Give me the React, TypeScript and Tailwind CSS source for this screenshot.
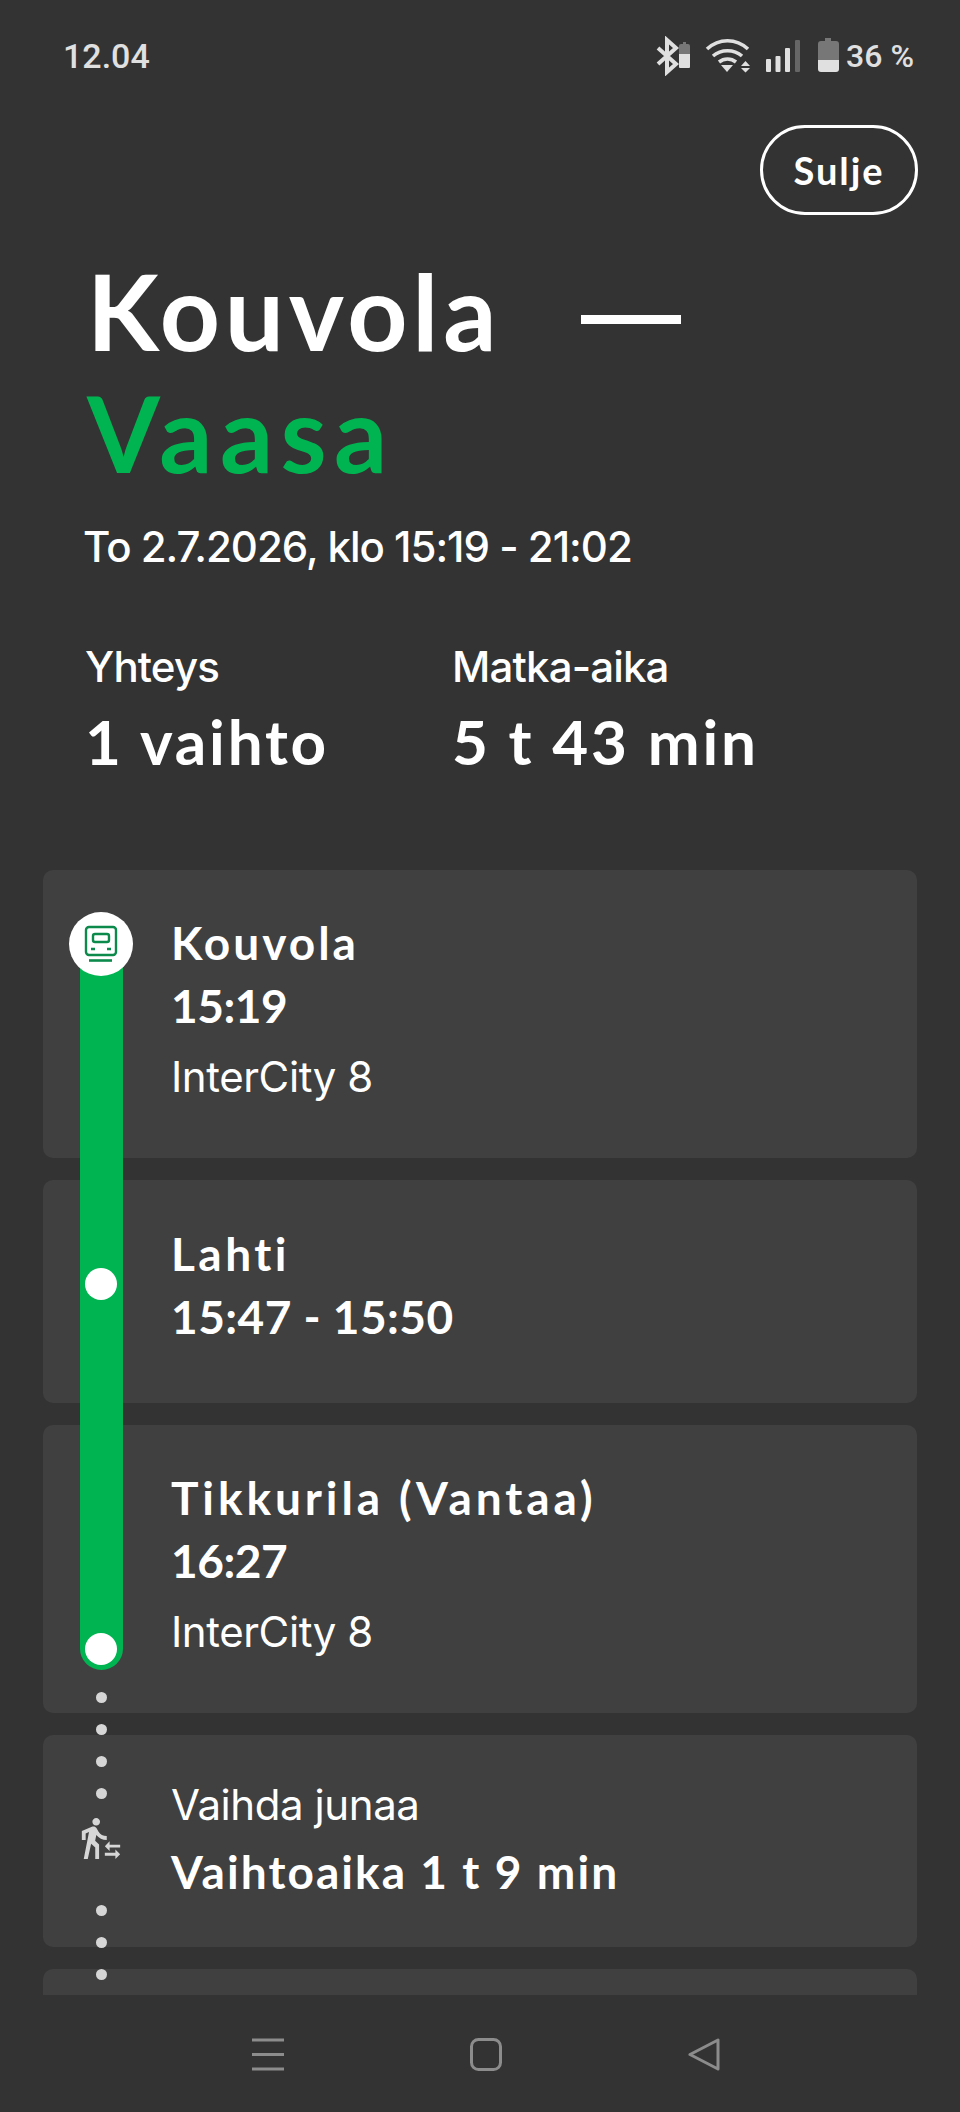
import { MdTransferWithinAStation } from 'react-icons/md';

const heading = "font-['Lato',sans-serif] font-bold";
const body = "font-['Inter',sans-serif]";

function StatusIcons() {
  return (
    <svg width="195" height="40" viewBox="0 0 195 40" fill="none" className="shrink-0">
      {/* bluetooth with small battery */}
      <path d="M7 12l18 16-9 8V4l9 8L7 28" stroke="#e0e0e0" strokeWidth="4" />
      <path d="M28 10q0-2 2-2h2V6h3v2h2q2 0 2 2v8H28z" fill="#777" />
      <path d="M28 18h11v13q0 1-1 1h-9q-1 0-1-1z" fill="#e0e0e0" />
      {/* wifi */}
      <path d="M56 13c12-11 29-11 41 0M62 20c8-7 21-7 29 0M68 26c5-4 12-4 17 0" stroke="#e0e0e0" strokeWidth="3.6" />
      <path d="M70 29h12l-6 7z" fill="#e0e0e0" />
      <path d="M90 30l4.5-5 4.5 5zM90 32h9l-4.500 4.500z" fill="#e0e0e0" />
      {/* signal */}
      <rect x="115" y="23" width="5" height="13" rx="1" fill="#e0e0e0" />
      <rect x="124.500" y="20" width="5" height="16" rx="1" fill="#e0e0e0" />
      <rect x="134" y="12" width="5" height="24" rx="1" fill="#e0e0e0" />
      <rect x="144" y="4" width="5" height="32" rx="1" fill="#666" />
      {/* battery */}
      <path d="M167 8a3 3 0 0 1 3-3h4V2h6v3h5a3 3 0 0 1 3 3v16h-21z" fill="#777" />
      <path d="M167 24h21v9a3 3 0 0 1-3 3h-15a3 3 0 0 1-3-3z" fill="#e0e0e0" />
    </svg>
  );
}

function TrainIcon() {
  return (
    <svg width="36" height="40" viewBox="0 0 36 40" fill="none" stroke="#0b8a4b" strokeWidth="2.4">
      <rect x="3" y="3" width="30" height="28" rx="3" />
      <rect x="10" y="10" width="16" height="8" rx="2" />
      <path d="M8 25h4M24 25h4" strokeWidth="2.600" />
      <path d="M6 36.500h23" strokeWidth="2.600" />
    </svg>
  );
}

function Dot({ className }: { className: string }) {
  return <span className={`absolute left-[53px] h-[11px] w-[11px] rounded-full bg-[#d6d6d6] ${className}`} />;
}

function Card({ className, children }: { className: string; children: React.ReactNode }) {
  return (
    <div className={`rounded-[10px] bg-[#404040] pl-[128px] text-white ${className}`}>{children}</div>
  );
}

const title = `${heading} text-[46px] leading-[63px]`;
const line = `${body} text-[42px] leading-[63px] tracking-[-0.01em]`;
const label = `${body} font-medium text-[42px] leading-[56px] tracking-[-0.02em]`;
const value = `${heading} mt-[7px] text-[62px] leading-[78px] tracking-[0.045em]`;

export default function App() {
  return (
    <div className="relative h-[2112px] w-[960px] overflow-hidden bg-[#333333] text-white">
      <div className="flex h-[112px] items-center justify-between pl-[63px] pr-[46px] font-['Roboto',sans-serif] font-medium text-[34px] text-[#e0e0e0]">
        <span>12.04</span>
        <div className="flex items-center">
          <StatusIcons />
          <span className="text-[32px]">36 %</span>
        </div>
      </div>

      <div className="flex justify-end pr-[42px] pt-[13px]">
        <button className={`h-[90px] w-[158px] rounded-[45px] border-[3px] border-white text-[38px] tracking-[0.05em] ${heading}`}>
          Sulje
        </button>
      </div>

      <h1 className={`${heading} mt-[34px] pl-[87px] text-[105px] leading-[122px]`}>
        <div className="flex items-center">
          <span className="tracking-[0.045em]">Kouvola</span>
          <span className="ml-[80px] mt-[18px] h-[9px] w-[100px] bg-white" />
        </div>
        <div className="tracking-[0.07em] text-[#00b551]">Vaasa</div>
      </h1>

      <p className={`${body} mt-[24px] pl-[83px] text-[42px] font-medium leading-[60px] tracking-[-0.024em]`}>
        To 2.7.2026, klo 15:19 - 21:02
      </p>

      <div className="mt-[62px] flex pl-[85px]">
        <div className="w-[367px]">
          <div className={label}>Yhteys</div>
          <div className={value}>1 vaihto</div>
        </div>
        <div>
          <div className={label}>Matka-aika</div>
          <div className={value}>5 t 43 min</div>
        </div>
      </div>

      <div className="relative mx-[43px] mt-[90px] flex h-[1125px] flex-col gap-[22px] overflow-hidden">
        <Card className="h-[288px] shrink-0 pt-[41px]">
          <div className={`${title} tracking-[0.065em]`}>Kouvola</div>
          <div className={`${title} tracking-[-0.01em]`}>15:19</div>
          <div className={`${line} mt-[8px]`}>InterCity 8</div>
        </Card>
        <Card className="h-[223px] shrink-0 pt-[42px]">
          <div className={`${title} tracking-[0.075em]`}>Lahti</div>
          <div className={`${title} tracking-[0.01em]`}>15:47 - 15:50</div>
        </Card>
        <Card className="h-[288px] shrink-0 pt-[41px]">
          <div className={`${title} tracking-[0.085em]`}>Tikkurila (Vantaa)</div>
          <div className={`${title} tracking-[-0.01em]`}>16:27</div>
          <div className={`${line} mt-[8px]`}>InterCity 8</div>
        </Card>
        <Card className="h-[212px] shrink-0 pt-[38px]">
          <div className={line}>Vaihda junaa</div>
          <div className={`${title} mt-[4px] tracking-[0.045em]`}>Vaihtoaika 1 t 9 min</div>
        </Card>
        <Card className="h-[100px] shrink-0"> </Card>

        {/* route line over the cards */}
        <div className="absolute left-[37px] top-[74px] h-[726px] w-[43px] rounded-b-[22px] bg-[#00b551]" />
        <div className="absolute left-[26px] top-[42px] flex h-[64px] w-[64px] items-center justify-center rounded-full bg-white">
          <TrainIcon />
        </div>
        <span className="absolute left-[42px] top-[398px] h-[32px] w-[32px] rounded-full bg-white" />
        <span className="absolute left-[42px] top-[763px] h-[32px] w-[32px] rounded-full bg-white" />
        <Dot className="top-[822px]" />
        <Dot className="top-[854px]" />
        <Dot className="top-[886px]" />
        <Dot className="top-[918px]" />
        <MdTransferWithinAStation className="absolute left-[35px] top-[945px] text-[#d6d6d6]" size={46} />
        <Dot className="top-[1035px]" />
        <Dot className="top-[1067px]" />
        <Dot className="top-[1099px]" />
      </div>

      <div className="flex h-[118px] items-center justify-between pl-[252px] pr-[240px]">
        <svg width="32" height="33" viewBox="0 0 32 33" stroke="#8c8c8c" strokeWidth="3">
          <path d="M0 2h32M0 16.500h32M0 31h32" />
        </svg>
        <svg width="32" height="33" viewBox="0 0 32 33" fill="none" stroke="#8c8c8c" strokeWidth="3">
          <rect x="1.500" y="1.500" width="29" height="30" rx="7" />
        </svg>
        <svg width="32" height="33" viewBox="0 0 32 33" fill="none" stroke="#8c8c8c" strokeWidth="3" strokeLinejoin="round">
          <path d="M30 2v29L2 16.500z" />
        </svg>
      </div>
    </div>
  );
}
